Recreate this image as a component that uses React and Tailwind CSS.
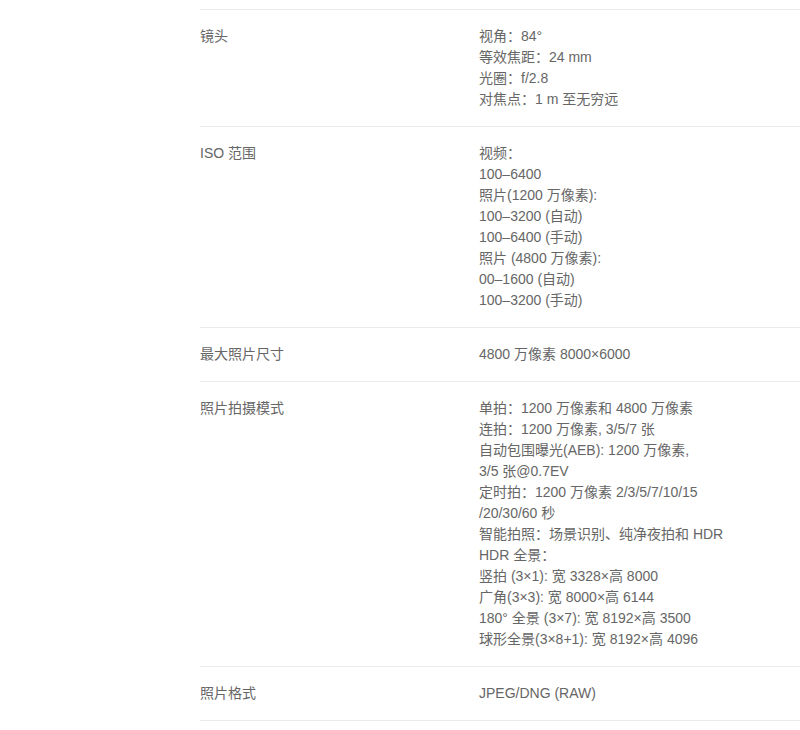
export default function App() {
  const specs = [
    {
      label: "镜头",
      lines: ["视角：84°", "等效焦距：24 mm", "光圈：f/2.8", "对焦点：1 m 至无穷远"],
    },
    {
      label: "ISO 范围",
      lines: [
        "视频：",
        "100–6400",
        "照片(1200 万像素):",
        "100–3200 (自动)",
        "100–6400 (手动)",
        "照片 (4800 万像素):",
        "00–1600 (自动)",
        "100–3200 (手动)",
      ],
    },
    { label: "最大照片尺寸", lines: ["4800 万像素 8000×6000"] },
    {
      label: "照片拍摄模式",
      lines: [
        "单拍：1200 万像素和 4800 万像素",
        "连拍：1200 万像素, 3/5/7 张",
        "自动包围曝光(AEB): 1200 万像素,",
        "3/5 张@0.7EV",
        "定时拍：1200 万像素 2/3/5/7/10/15",
        "/20/30/60 秒",
        "智能拍照：场景识别、纯净夜拍和 HDR",
        "HDR 全景：",
        "竖拍 (3×1): 宽 3328×高 8000",
        "广角(3×3): 宽 8000×高 6144",
        "180° 全景 (3×7): 宽 8192×高 3500",
        "球形全景(3×8+1): 宽 8192×高 4096",
      ],
    },
    { label: "照片格式", lines: ["JPEG/DNG (RAW)"] },
  ];

  return (
    <div className="min-h-screen w-full bg-white pl-[200px] pt-[9px] text-[14px] leading-[21px] text-[#666] font-['Liberation_Sans','Noto_Sans_CJK_SC',sans-serif]">
      <div className="border-b border-[#ebebeb]">
        {specs.map((row) => (
          <div
            key={row.label}
            className="grid grid-cols-[279px_1fr] border-t border-[#ebebeb] py-4"
          >
            <div>{row.label}</div>
            <div>
              {row.lines.map((line, i) => (
                <div key={i} className="whitespace-nowrap">
                  {line}
                </div>
              ))}
            </div>
          </div>
        ))}
      </div>
    </div>
  );
}
